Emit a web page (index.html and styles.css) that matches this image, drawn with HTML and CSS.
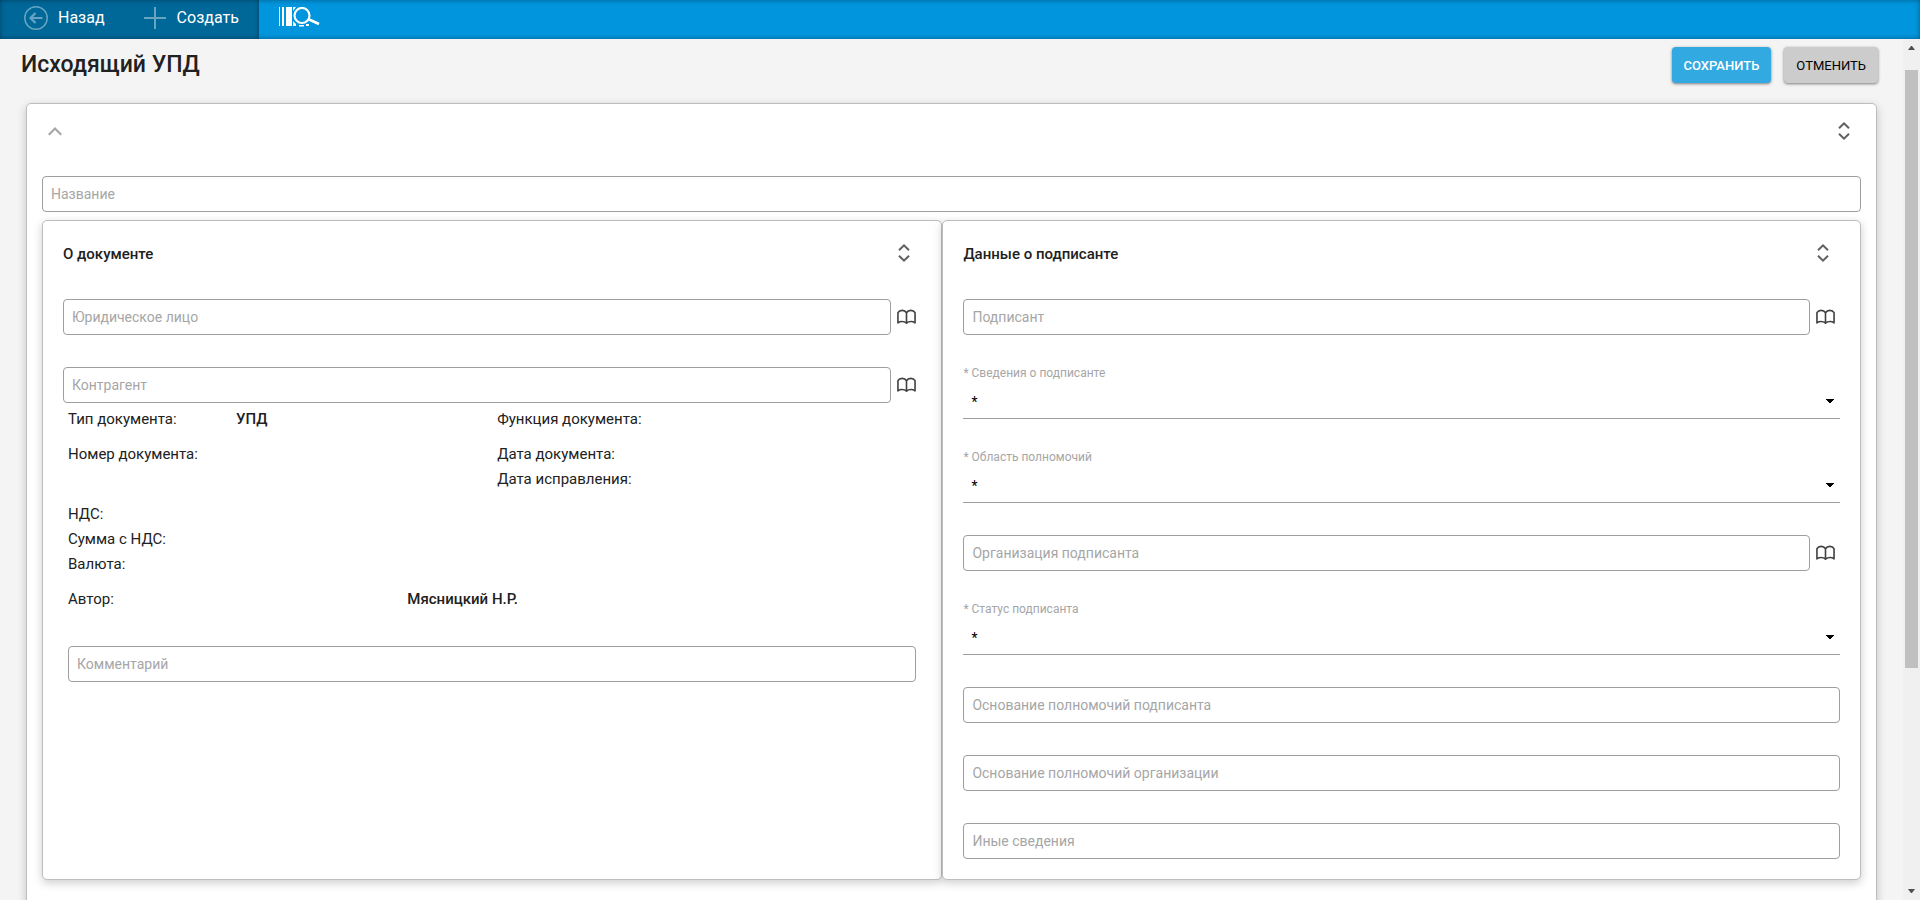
FILE: index.html
```html
<!DOCTYPE html>
<html lang="ru">
<head>
<meta charset="utf-8">
<title>Исходящий УПД</title>
<link rel="stylesheet" href="styles.css">
</head>
<body>
<svg class="defs" aria-hidden="true">
  <symbol id="unfold" viewBox="0 0 24 24"><path d="M12 3l5.700 5.500-1.400 1.400L12 5.800 7.700 9.900 6.300 8.500zM12 21l5.700-5.500-1.400-1.400-4.300 4.100-4.300-4.100-1.400 1.400z"/></symbol>
  <symbol id="book" viewBox="0 0 20 16"><path d="M10 3.5C9 1.8 7.4 1 5.5 1S1.8 1.9 1 3.3V14.2c1.2-.9 2.600-1.400 4.200-1.400S8.800 13.400 10 14.500c1.200-1.100 3.200-1.700 4.800-1.700s3 .5 4.200 1.400V3.300C18.200 1.900 16.400 1 14.500 1S11 1.800 10 3.500zM10 3.500v11" fill="none" stroke="currentColor" stroke-width="1.700" stroke-linejoin="round"/></symbol>
</svg>
<header class="topbar">
  <nav class="topbar-nav">
    <button class="nav-button" type="button">
      <svg class="nav-icon" viewBox="0 0 24 24"><circle cx="12" cy="12" r="11.200"/><path d="M18.500 12H6.500M11.500 7l-5 5 5 5" stroke-width="2.200"/></svg>
      <span>Назад</span>
    </button>
    <button class="nav-button nav-create" type="button">
      <svg class="nav-icon" viewBox="0 0 24 24"><path d="M12 1v22M1 12h22" stroke-width="2"/></svg>
      <span>Создать</span>
    </button>
  </nav>
  <button class="scan-button" type="button" aria-label="Поиск по штрихкоду">
    <svg class="scan-icon" viewBox="0 0 42 20"><path d="M0 0h1v19H0zM3 0h2v19H3zM7 0h6v19H7zM14 0h3l-3 4zM14 14l3 3v2h-3zM20 18h5v1.500h-5zM27 17h3v2h-3z" fill="#fff"/><circle cx="23" cy="8.500" r="7.500" fill="none" stroke="#fff" stroke-width="2.200"/><path d="M29 12l11 5" stroke="#fff" stroke-width="2.600"/></svg>
  </button>
</header>
<div class="viewport">
  <main class="page">
    <div class="page-head">
      <h1 class="page-title">Исходящий УПД</h1>
      <div class="actions">
        <button class="action action-save" type="button">СОХРАНИТЬ</button>
        <button class="action action-cancel" type="button">ОТМЕНИТЬ</button>
      </div>
    </div>
    <section class="card">
      <div class="card-head card-head-main">
        <button class="icon-button" type="button" aria-label="Свернуть"><svg class="icon icon-collapse" viewBox="0 0 24 24"><path d="M13 8l-7 7 1.500 1.500L13 11l5.500 5.500L20 15z"/></svg></button>
        <button class="icon-button" type="button" aria-label="Развернуть"><svg class="icon"><use href="#unfold"/></svg></button>
      </div>
      <input class="input" type="text" placeholder="Название" aria-label="Название">
      <div class="panels">
        <section class="panel">
          <div class="card-head">
            <h2 class="panel-title">О документе</h2>
            <button class="icon-button" type="button" aria-label="Развернуть"><svg class="icon"><use href="#unfold"/></svg></button>
          </div>
          <div class="fields">
            <div class="lookup">
              <input class="input" type="text" placeholder="Юридическое лицо" aria-label="Юридическое лицо">
              <button class="book-button" type="button" aria-label="Выбрать"><svg class="book"><use href="#book"/></svg></button>
            </div>
            <div class="lookup">
              <input class="input" type="text" placeholder="Контрагент" aria-label="Контрагент">
              <button class="book-button" type="button" aria-label="Выбрать"><svg class="book"><use href="#book"/></svg></button>
            </div>
          </div>
          <div class="details">
            <div class="detail-row detail-typed"><span>Тип документа:</span><strong>УПД</strong><span>Функция документа:</span></div>
            <div class="detail-row detail-typed"><span>Номер документа:</span><span></span><span class="detail-stack"><span>Дата документа:</span><span>Дата исправления:</span></span></div>
            <div class="detail-stack"><span>НДС:</span><span>Сумма с НДС:</span><span>Валюта:</span></div>
            <div class="detail-row detail-author"><span>Автор:</span><strong>Мясницкий Н.Р.</strong></div>
          </div>
          <div class="comment">
            <input class="input" type="text" placeholder="Комментарий" aria-label="Комментарий">
          </div>
        </section>
        <section class="panel">
          <div class="card-head">
            <h2 class="panel-title">Данные о подписанте</h2>
            <button class="icon-button" type="button" aria-label="Развернуть"><svg class="icon"><use href="#unfold"/></svg></button>
          </div>
          <div class="fields">
            <div class="lookup">
              <input class="input" type="text" placeholder="Подписант" aria-label="Подписант">
              <button class="book-button" type="button" aria-label="Выбрать"><svg class="book"><use href="#book"/></svg></button>
            </div>
            <div class="choice">
              <label class="choice-label" for="info">* Сведения о подписанте</label>
              <select class="select" id="info"><option>*</option></select>
            </div>
            <div class="choice">
              <label class="choice-label" for="scope">* Область полномочий</label>
              <select class="select" id="scope"><option>*</option></select>
            </div>
            <div class="lookup">
              <input class="input" type="text" placeholder="Организация подписанта" aria-label="Организация подписанта">
              <button class="book-button" type="button" aria-label="Выбрать"><svg class="book"><use href="#book"/></svg></button>
            </div>
            <div class="choice">
              <label class="choice-label" for="status">* Статус подписанта</label>
              <select class="select" id="status"><option>*</option></select>
            </div>
            <input class="input" type="text" placeholder="Основание полномочий подписанта" aria-label="Основание полномочий подписанта">
            <input class="input" type="text" placeholder="Основание полномочий организации" aria-label="Основание полномочий организации">
            <input class="input" type="text" placeholder="Иные сведения" aria-label="Иные сведения">
          </div>
        </section>
      </div>
    </section>
  </main>
  <div class="scrollbar" aria-hidden="true">
    <svg class="scroll-arrow" viewBox="0 0 7 4"><path d="M3 0h1l3 4H0z"/></svg>
    <div class="scroll-track"><div class="scroll-thumb"></div></div>
    <svg class="scroll-arrow" viewBox="0 0 7 4"><path d="M0 0h7L4 4H3z"/></svg>
  </div>
</div>
</body>
</html>
```
FILE: styles.css
```css
* { box-sizing: border-box; }
body {
  margin: 0;
  height: 100vh;
  display: flex;
  flex-direction: column;
  overflow: hidden;
  background: #f4f4f4;
  color: #212121;
  font-family: Roboto, sans-serif;
  font-size: 15px;
}
button, input, select { font: inherit; margin: 0; }
button { border: 0; padding: 0; background: none; cursor: pointer; }
.defs { position: absolute; width: 0; height: 0; }

.topbar {
  flex: none;
  display: flex;
  height: 39px;
  background: #0095dd;
  box-shadow: inset 0 0 5px rgba(0, 0, 0, 0.4);
}
.topbar-nav {
  display: flex;
  gap: 38px;
  padding: 0 20px 4px 24px;
  background: #006799;
  box-shadow: inset 0 0 5px rgba(0, 0, 0, 0.4);
}
.nav-button {
  display: flex;
  align-items: center;
  gap: 10px;
  color: #fff;
  font-size: 16px;
}
.nav-icon {
  width: 24px;
  height: 24px;
  fill: none;
  stroke: #66a4c2;
  stroke-width: 1.5;
}
.scan-button { display: flex; padding: 7px 20px; }
.scan-icon { width: 42px; height: 20px; }

.viewport { flex: 1; min-height: 0; display: flex; }
.page { flex: 1; min-width: 0; overflow: hidden; padding: 8px 26px 0; }
.page-head {
  display: flex;
  justify-content: space-between;
  align-items: flex-start;
  margin: 0 -1px 20px -5px;
}
.page-title { margin: 0; font-size: 23px; line-height: 36px; font-weight: 500; }
.actions { display: flex; gap: 13px; }
.action {
  height: 36px;
  padding: 0 12px;
  border-radius: 4px;
  font-size: 13px;
  box-shadow: 0 1px 3px rgba(0, 0, 0, 0.5);
}
.action-save { background: #33a9e2; color: #fff; font-weight: 500; }
.action-cancel { background: #ccc; color: #000; }

.card, .panel {
  border: 1px solid #bdbdbd;
  border-radius: 5px;
  background: #fff;
  box-shadow: 0 3px 10px rgba(0, 0, 0, 0.2);
}
.card { padding: 15px; min-height: 1100px; }
.card-head {
  display: flex;
  justify-content: space-between;
  align-items: center;
  height: 24px;
  padding-right: 5px;
  margin-bottom: 34px;
}
.card-head-main { margin-bottom: 33px; }
.icon-button { display: flex; }
.icon { width: 24px; height: 24px; fill: #616161; }
.icon-collapse { fill: #a6a6a6; }

.input {
  display: block;
  width: 100%;
  height: 36px;
  padding: 0 8px;
  border: 1px solid #9e9e9e;
  border-radius: 4px;
  background: #fff;
  font-size: 14px;
}
.input::placeholder { color: #a6a6a6; opacity: 1; }

.panels { display: grid; grid-template-columns: 99fr 101fr; margin-top: 8px; }
.panel { padding: 20px; }
.panel-title { margin: 0; padding-top: 2px; font-size: 15px; font-weight: 500; }
.fields { display: grid; gap: 32px; }
.lookup { display: flex; }
.book-button { flex: none; display: flex; justify-content: center; align-items: center; width: 30px; color: #424242; }
.book { width: 19px; height: 16px; }

.choice { height: 52px; border-bottom: 1px solid #9e9e9e; }
.choice-label { display: block; font-size: 12px; line-height: 12px; color: #a6a6a6; }
.select {
  display: block;
  width: 100%;
  height: 39px;
  padding: 6px 8px 0;
  border: 0;
  appearance: none;
  color: #000;
  font-size: 14px;
  background: conic-gradient(from 315deg at 50% 100%, #000 90deg, transparent 0) no-repeat right 6px top 20px / 8px 4px;
}

.details { display: grid; gap: 10px; padding: 4px 5px 0; line-height: 25px; }
.detail-row { display: grid; }
.detail-typed { grid-template-columns: 168fr 261fr 419fr; }
.detail-author { grid-template-columns: 2fr 3fr; }
.detail-stack { display: grid; }
strong { font-weight: 500; }
.comment { padding: 34px 5px 0; }

.scrollbar {
  flex: none;
  display: flex;
  flex-direction: column;
  align-items: center;
  gap: 6px;
  width: 17px;
  padding: 7px 0;
  background: #f0f0f0;
}
.scroll-arrow { width: 7px; height: 4px; fill: #505050; }
.scroll-track { flex: 1; width: 13px; padding-top: 14px; }
.scroll-thumb { height: 73.5%; background: #c0c0c0; }
```
